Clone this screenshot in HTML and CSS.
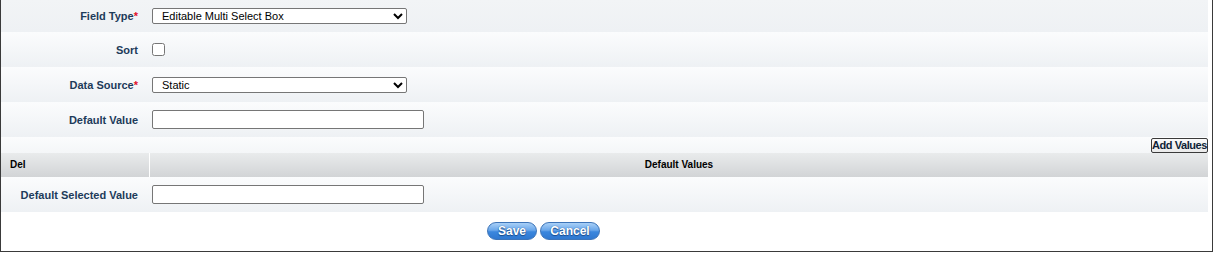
FILE: index.html
```html
<!DOCTYPE html>
<html>
<head>
<meta charset="utf-8">
<link rel="stylesheet" href="styles.css">
</head>
<body>
<div class="frame">
  <div class="form">
    <div class="row first">
      <div class="label">Field Type<span class="req">*</span></div>
      <div class="field">
        <select class="sel"><option>Editable Multi Select Box</option></select>
      </div>
    </div>
    <div class="row">
      <div class="label">Sort</div>
      <div class="field"><input type="checkbox" class="chk"></div>
    </div>
    <div class="row">
      <div class="label">Data Source<span class="req">*</span></div>
      <div class="field">
        <select class="sel"><option>Static</option></select>
      </div>
    </div>
    <div class="row">
      <div class="label">Default Value</div>
      <div class="field"><input type="text" class="txt"></div>
    </div>
    <div class="addrow">
      <button class="addbtn">Add Values</button>
    </div>
    <div class="head">
      <div class="hdel">Del</div>
      <div class="hvals">Default Values</div>
    </div>
    <div class="row">
      <div class="label">Default Selected Value</div>
      <div class="field"><input type="text" class="txt"></div>
    </div>
  </div>
  <div class="actions">
    <button class="pill save">Save</button>
    <button class="pill cancel">Cancel</button>
  </div>
</div>
</body>
</html>
```
FILE: styles.css
```css
html, body {
  margin: 0;
  padding: 0;
  background: #ffffff;
}
body {
  font-family: "Liberation Sans", Arial, sans-serif;
  font-size: 11px;
}
.frame {
  width: 1211px;
  height: 251px;
  border-left: 1px solid #3a3a3a;
  border-right: 1px solid #3a3a3a;
  border-bottom: 1px solid #3a3a3a;
  box-sizing: content-box;
}
.form {
  width: 1207px;
}
.row {
  display: grid;
  grid-template-columns: 146px 1fr;
  align-items: center;
  height: 35px;
  background: linear-gradient(#fbfcfd, #eef1f4);
}
.row.first {
  height: 32px;
  background: linear-gradient(#f2f4f6, #eef1f4);
}
.label {
  text-align: right;
  padding-right: 9px;
  font-weight: bold;
  color: #1d3b5a;
  font-size: 11px;
}
.req {
  color: #e0102a;
}
.field {
  padding-left: 5px;
  display: flex;
  align-items: center;
}
.sel {
  width: 255px;
  height: 16px;
  font-family: "Liberation Sans", Arial, sans-serif;
  font-size: 11px;
  padding: 0 0 0 5px;
  border: 1px solid #767676;
  border-radius: 2px;
  background: #fff;
  color: #000;
  margin: 0;
}
.chk {
  width: 13px;
  height: 13px;
  margin: 0;
}
.txt {
  width: 272px;
  height: 19px;
  box-sizing: border-box;
  border: 1px solid #767676;
  border-radius: 2px;
  margin: 0;
  padding: 0 3px;
  font-family: "Liberation Sans", Arial, sans-serif;
  font-size: 11px;
}
.addrow {
  height: 16px;
  display: flex;
  justify-content: flex-end;
  align-items: flex-start;
  padding-top: 1px;
  box-sizing: border-box;
  background: linear-gradient(#fbfcfd, #f4f6f8);
}
.addbtn {
  height: 15px;
  width: 57px;
  padding: 0;
  margin: 0;
  white-space: nowrap;
  border: 1px solid #3a3a3a;
  border-radius: 2px;
  background: linear-gradient(#fafafa, #eaeaea);
  font-family: "Liberation Sans", Arial, sans-serif;
  font-size: 11px;
  font-weight: bold;
  letter-spacing: -0.45px;
  color: #0e1e36;
  line-height: 13px;
}
.head {
  display: grid;
  grid-template-columns: 148px 1fr;
  column-gap: 1px;
  height: 24px;
  background: #ffffff;
}
.hdel, .hvals {
  background: linear-gradient(#e9ebec, #d2d4d6);
  font-weight: bold;
  font-size: 10px;
  color: #000;
  display: flex;
  align-items: center;
  padding-bottom: 2px;
  box-sizing: border-box;
}
.hdel {
  padding-left: 9px;
}
.hvals {
  justify-content: center;
}
.actions {
  display: flex;
  gap: 3px;
  padding-top: 10px;
  padding-left: 486px;
}
.pill {
  height: 18px;
  border: 1px solid #3d74b8;
  border-radius: 9px;
  background: linear-gradient(#a9d0f7 0%, #6aa7ea 45%, #3b87de 55%, #2f78d0 100%);
  color: #ffffff;
  font-family: "Liberation Sans", Arial, sans-serif;
  font-weight: bold;
  font-size: 12px;
  text-shadow: 0 0 1px #1b4c8c, 0 1px 1px #1b4c8c;
  padding: 0;
  margin: 0;
  line-height: 16px;
}
.save {
  width: 50px;
}
.cancel {
  width: 60px;
}
```
